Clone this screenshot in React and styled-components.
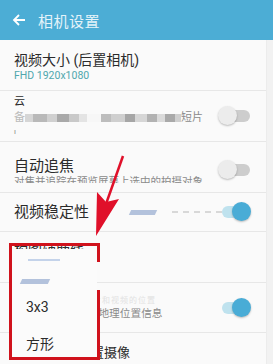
import React from "react";
import styled, { createGlobalStyle } from "styled-components";

const Global = createGlobalStyle`
  html, body { margin: 0; padding: 0; background: #f2f2f2; }
  body { font-family: Roboto, "Noto Sans CJK SC", sans-serif; }
  * { box-sizing: border-box; }
`;

const Page = styled.div`
  position: relative;
  width: 273px;
  height: 364px;
  overflow: hidden;
  background: #f2f2f2;
`;

const Header = styled.header`
  height: 40px;
  background: #4cadd5;
  display: flex;
  align-items: center;
  padding-left: 12px;
  gap: 12px;
`;

const Title = styled.div`
  color: #e4f3f9;
  font-size: 15px;
  letter-spacing: 0.5px;
`;

const Card = styled.div`
  background: #fafafa;
  margin-right: 6px;
  border-right: 1px solid #ececec;
`;

const Row = styled.div`
  position: relative;
  height: ${(p) => p.$h}px;
  padding: ${(p) => p.$pt || 0}px 16px 0 14px;
  display: flex;
  align-items: center;
  border-bottom: ${(p) => (p.$last ? "none" : "1px solid #e7e7e7")};
`;

const Texts = styled.div`
  flex: 1;
  display: flex;
  flex-direction: column;
  min-width: 0;
`;

const RowTitle = styled.div`
  font-size: ${(p) => p.$size || 14}px;
  line-height: 18px;
  color: #2b2b2b;
  white-space: nowrap;
  margin-left: ${(p) => p.$indent || 0}px;
`;

const Sub = styled.div`
  font-size: ${(p) => p.$size || 10.5}px;
  line-height: 14px;
  color: ${(p) => p.$color || "#8a8a8a"};
  white-space: nowrap;
  display: flex;
  align-items: center;
  margin-left: ${(p) => p.$indent || 0}px;
`;

const CutSub = styled(Sub)`
  height: 8px;
  overflow: hidden;
  align-items: flex-start;
`;

const Track = styled.div`
  position: relative;
  width: 28px;
  height: 12px;
  border-radius: 6px;
  background: ${(p) => (p.$on ? "#bfe2ee" : "#cdcdcd")};
  flex: none;
`;

const Knob = styled.div`
  position: absolute;
  top: -4px;
  left: ${(p) => (p.$on ? "10px" : "-4px")};
  width: 19px;
  height: 19px;
  border-radius: 50%;
  background: ${(p) => (p.$on ? "#49acd6" : "#ececec")};
  box-shadow: 0 1px 2px rgba(0, 0, 0, 0.25);
`;

const Toggle = ({ on }) => (
  <Track $on={on}>
    <Knob $on={on} />
  </Track>
);

const Block = styled.span`
  display: inline-block;
  height: ${(p) => p.$hgt || 8}px;
  width: ${(p) => p.$w}px;
  background: ${(p) => p.$c};
  flex: none;
`;

const Skew = styled.span`
  display: inline-block;
  width: ${(p) => p.$w}px;
  height: 5px;
  background: #b3c2dc;
  transform: skewX(-25deg);
`;

const Dash = styled.span`
  display: inline-block;
  width: ${(p) => p.$w}px;
  margin-left: ${(p) => p.$gap || 0}px;
  border-top: 2px dashed #d8d8d8;
`;

const Popup = styled.div`
  position: absolute;
  left: 11px;
  top: 249px;
  width: 86px;
  height: 112px;
  background: #fbfbfb;
  display: flex;
  flex-direction: column;
`;

const MenuItem = styled.div`
  height: 37px;
  display: flex;
  align-items: center;
  padding-left: 15px;
  font-size: 14px;
  color: #2b2b2b;
`;

const MenuDeco = styled.div`
  height: ${(p) => p.$h}px;
  padding: ${(p) => p.$pt || 0}px 0 0 ${(p) => p.$pl}px;
  display: flex;
  align-items: flex-start;
`;

const Frame = styled.div`
  position: absolute;
  left: 9px;
  top: 243px;
  width: 91px;
  height: 117px;
  border: 3px solid #d0121c;
  border-right-color: transparent;
`;

const FrameSeg = styled.div`
  position: absolute;
  left: 97px;
  width: 3px;
  top: ${(p) => p.$top}px;
  height: ${(p) => p.$h}px;
  background: #d0121c;
`;

const Arrow = styled.svg`
  position: absolute;
  left: 0;
  top: 0;
  pointer-events: none;
`;

const Faint = styled.div`
  font-size: 8px;
  line-height: 12px;
  color: #e2e2e2;
  letter-spacing: 1px;
  margin-left: ${(p) => p.$indent || 0}px;
`;

export default function App() {
  const scramble = [
    [8, "#d6d6d6"], [14, "#b9b9b9"], [10, "#d0d0d0"], [12, "#a9a9a9"], [10, "#c9c9c9"],
    [8, "#e4e4e4"], [14, "#f7f7f7"], [10, "#bdbdbd"], [14, "#cfcfcf"], [10, "#a6a6a6"],
    [12, "#d6d6d6"], [10, "#b2b2b2"], [8, "#dadada"], [10, "#a9a9a9"], [6, "#cfcfcf"],
  ];
  return (
    <Page>
      <Global />
      <Header>
        <svg width="14" height="14" viewBox="0 0 14 14">
          <path d="M13 7H2M7 2L2 7l5 5" stroke="#ffffff" strokeWidth="1.8" fill="none" />
        </svg>
        <Title>相机设置</Title>
      </Header>
      <Card>
        <Row $h={51} $pt={3}>
          <Texts>
            <RowTitle>视频大小 (后置相机)</RowTitle>
            <Sub $color="#4fa7ad">FHD 1920x1080</Sub>
          </Texts>
        </Row>
        <Row $h={51}>
          <Texts>
            <RowTitle $size={11}>云</RowTitle>
            <Sub $size={11}>
              <span style={{ color: "#bbb" }}>备</span>
              {scramble.map(([w, c], i) => (
                <Block key={i} $w={w} $c={c} />
              ))}
              <span>短片</span>
            </Sub>
            <Sub $size={8}>ı</Sub>
          </Texts>
          <Toggle />
        </Row>
        <Row $h={51} $pt={6}>
          <Texts>
            <RowTitle $size={15}>自动追焦</RowTitle>
            <CutSub>对焦并追踪在预览屏幕上选中的拍摄对象</CutSub>
          </Texts>
          <Toggle />
        </Row>
        <Row $h={39}>
          <Texts>
            <RowTitle $size={15}>视频稳定性</RowTitle>
          </Texts>
          <Skew $w={26} />
          <Dash $w={50} $gap={16} />
          <Toggle on />
        </Row>
        <Row $h={51}>
          <Texts>
            <RowTitle $size={14}>构图辅助线</RowTitle>
            <Sub>关</Sub>
          </Texts>
        </Row>
        <Row $h={50}>
          <Texts>
            <Faint $indent={52}>存储照片和视频的位置</Faint>
            <Sub $size={10.7} $indent={63}>添加地理位置信息</Sub>
          </Texts>
          <Toggle on />
        </Row>
        <Row $h={40} $last>
          <Texts>
            <RowTitle $size={13} $indent={64}>前置摄像</RowTitle>
          </Texts>
        </Row>
      </Card>

      <Popup>
        <MenuDeco $h={30} $pt={10} $pl={17}>
          <Block $w={32} $hgt={2} $c="#c4d3ea" />
        </MenuDeco>
        <MenuDeco $h={10} $pl={10}>
          <Skew $w={28} />
        </MenuDeco>
        <MenuItem>3x3</MenuItem>
        <MenuItem>方形</MenuItem>
      </Popup>
      <Frame />
      <FrameSeg $top={243} $h={19} />
      <FrameSeg $top={290} $h={70} />

      <Arrow width="273" height="364" viewBox="0 0 273 364">
        <line x1="123" y1="156" x2="106" y2="204" stroke="#e0102a" strokeWidth="2.5" />
        <path d="M96 236 L97 192 L106 202 L119 199 Z" fill="#e0102a" />
      </Arrow>
    </Page>
  );
}
